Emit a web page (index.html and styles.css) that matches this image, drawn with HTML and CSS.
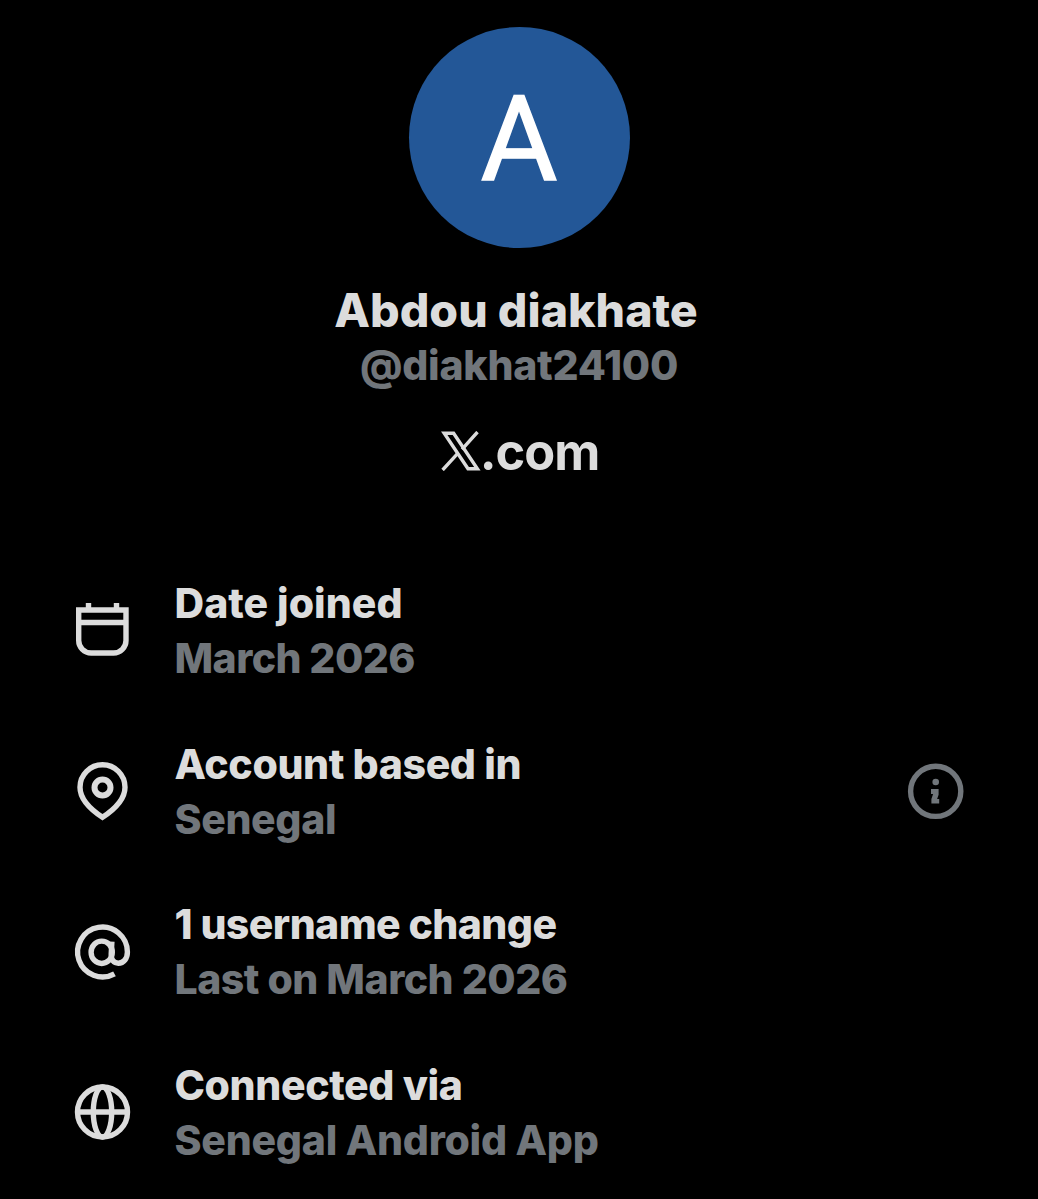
FILE: index.html
```html
<!DOCTYPE html>
<html lang="en">
<head>
<meta charset="utf-8">
<title>About this account</title>
<link rel="stylesheet" href="styles.css">
</head>
<body>
<main class="about">
  <header class="profile">
    <div class="avatar">A</div>
    <h1 class="name">Abdou diakhate</h1>
    <p class="handle">@diakhat24100</p>
    <div class="brand">
      <svg class="brand-mark" viewBox="0 0 40 40" fill="none" stroke="currentColor" stroke-width="3.4"><path d="M3.2 2.2H12.6L36.4 37.8H27Z"/><path d="M36.5 1L21 18.3M1.6 39L17 22.2"/></svg><span>.com</span>
    </div>
  </header>
  <ul class="facts">
    <li class="fact">
      <svg class="icon" viewBox="-0.5 0 66 66"><path d="M9.2 12H56.5V42.5a12.5 12.5 0 0 1-12.5 12.5H21.7a12.5 12.5 0 0 1-12.5-12.5ZM9.2 24.5H56.5M19 5V12M47 5V12"/></svg>
      <div class="text"><h2 class="label">Date joined</h2><p class="value tight-xl">March 2026</p></div>
    </li>
    <li class="fact">
      <svg class="icon" viewBox="-0.5 -0.5 66 66"><path d="M33 58.8C22 51.5 10.5 42 10.5 28.7a22.5 22.5 0 0 1 45 0C55.5 42 44 51.5 33 58.8Z"/><circle cx="33" cy="29" r="8" stroke-width="6"/></svg>
      <div class="text"><h2 class="label tight-m">Account based in</h2><p class="value tight-m">Senegal</p></div>
      <svg class="icon icon-info" viewBox="0.3 -0.3 66 66"><circle cx="33" cy="33" r="25.1"/><circle class="solid" cx="33" cy="23.7" r="3.3"/><path class="solid" d="M28.3 30.8h7.6v5.6l-1.5 4.4h2.1v4.5h-7.8v-4.6l1.7-5h-2.1z"/></svg>
    </li>
    <li class="fact">
      <svg class="icon" viewBox="-0.5 0 66 66"><ellipse cx="32.2" cy="33.3" rx="10.6" ry="11.2"/><path d="M42.4 22.6L41.7 35C41.3 41 44.5 44.2 48.8 44.2C54.3 44.2 57.9 39.5 57.9 33A24.9 24.9 0 1 0 45 54.8"/></svg>
      <div class="text"><h2 class="label tight-xl">1 username change</h2><p class="value tight-l">Last on March 2026</p></div>
    </li>
    <li class="fact">
      <svg class="icon" viewBox="-0.5 0 66 66"><circle cx="33" cy="33" r="25"/><ellipse cx="33" cy="33" rx="9.2" ry="25"/><path d="M8 33H58"/></svg>
      <div class="text"><h2 class="label tight-m">Connected via</h2><p class="value tight-s">Senegal Android App</p></div>
    </li>
  </ul>
</main>
</body>
</html>
```
FILE: styles.css
```css
* { box-sizing: border-box; margin: 0; padding: 0; }
body {
  background: #000;
  color: #dcdcdc;
  font-family: Inter, "Liberation Sans", sans-serif;
  font-weight: 800;
}
.about { width: 1038px; height: 1199px; padding-top: 27px; overflow: hidden; }
.profile { display: flex; flex-direction: column; align-items: center; }
.avatar {
  display: flex; align-items: center; justify-content: center;
  width: 221px; height: 221px; border-radius: 50%;
  padding-top: 4px;
  background: #235797; color: #fff;
  font: 400 118px/1 Roboto, sans-serif;
  -webkit-text-stroke: 1.4px #fff;
}
.name { margin-top: 34px; padding-right: 6px; font-size: 46.5px; line-height: 56px; font-weight: 800; }
.handle { font-size: 41px; line-height: 54px; letter-spacing: -0.23px; color: #71767b; }
.brand { display: flex; align-items: center; margin-top: 30px; padding-left: 2px; font-size: 50.5px; line-height: 60px; font-weight: 700; letter-spacing: -1px; }
.brand-mark { width: 40px; height: 40px; margin: -2px -1px 0 0; }
.facts { list-style: none; margin-top: 93px; padding: 0 69px; display: flex; flex-direction: column; gap: 49.5px; }
.fact { display: flex; align-items: center; height: 111px; }
.icon { width: 66px; height: 66px; flex: none; fill: none; stroke: currentColor; stroke-width: 5.4; }
.icon-info { margin-left: auto; color: #71767b; }
.solid { fill: currentColor; stroke: none; }
.text { margin-left: 39.5px; font-size: 41px; white-space: nowrap; }
.label { font-size: inherit; font-weight: 800; line-height: 56px; }
.value { color: #71767b; line-height: 55px; }
.tight-s { letter-spacing: -0.26px; }
.tight-m { letter-spacing: -0.38px; }
.tight-l { letter-spacing: -0.5px; }
.tight-xl { letter-spacing: -0.58px; }
```
